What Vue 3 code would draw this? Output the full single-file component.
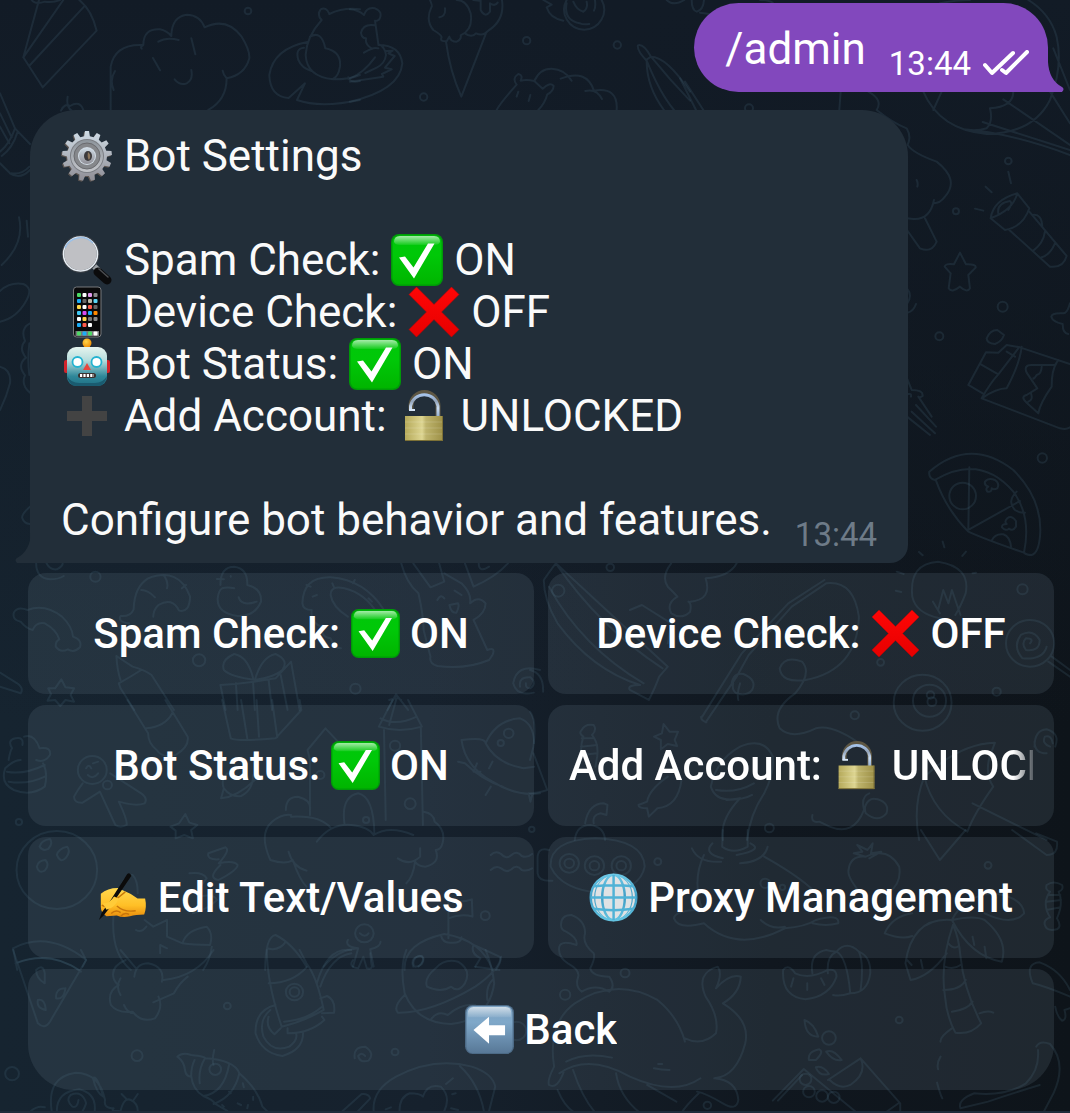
<script setup>
const statusLines = [
  { icon: 'lens', label: 'Spam Check:', mark: 'check', value: 'ON' },
  { icon: 'phone', label: 'Device Check:', mark: 'cross', value: 'OFF' },
  { icon: 'robot', label: 'Bot Status:', mark: 'check', value: 'ON' },
  { icon: 'plus', label: 'Add Account:', mark: 'lock', value: 'UNLOCKED' },
]

const keyboard = [
  { before: 'Spam Check:', icon: 'check', after: 'ON' },
  { before: 'Device Check:', icon: 'cross', after: 'OFF' },
  { before: 'Bot Status:', icon: 'check', after: 'ON' },
  { before: 'Add Account:', icon: 'lock', after: 'UNLOCKED', long: true },
  { before: '', icon: 'write', after: 'Edit Text/Values' },
  { before: '', icon: 'globe', after: 'Proxy Management' },
  { before: '', icon: 'back', after: 'Back', wide: true },
]

// Outline of a toothed wheel centred on (26, 26)
function gearPath(teeth, outer, inner) {
  const step = (Math.PI * 2) / teeth
  const pts = []
  for (let i = 0; i < teeth; i++) {
    const a = i * step - Math.PI / 2
    for (const [r, k] of [[inner, -0.3], [outer, -0.17], [outer, 0.17], [inner, 0.3]]) {
      pts.push(`${(26 + r * Math.cos(a + k * step)).toFixed(2)} ${(26 + r * Math.sin(a + k * step)).toFixed(2)}`)
    }
  }
  return `M${pts.join('L')}Z`
}
const gear = gearPath(13, 25, 20)

const appRows = [
  ['#4cd964', '#fff', '#e29cf0', '#8a8a8a'],
  ['#1badf8', '#666', '#bdb9a8', '#5bd6f5'],
  ['#ffd84a', '#fff', '#ff5a4a', '#666'],
  ['#3fc8f5', '#d84cf0', '#1badf8', '#ff8a00'],
  ['#fff', '#ffd84a', '#777', '#888'],
  ['#1badf8', '#ff5a4a', '#fff', '#0a0a0a'],
]
const dock = ['#4cd964', '#1badf8', '#4cd964', '#fff']

// Wallpaper doodles, grouped by tile: origin, scale, strokes and small rings
const tiles = [
  {
    at: 'translate(0 0) scale(.3333)',
    d: 'M117 0L70 172L128 262L290 92Q275 30 238 0M70 172L190 0M90 195L252 20M95 0Q105 15 135 5Q160 8 180 0M0 280L45 385L90 432M0 380L28 430M0 340L35 412M45 385Q30 430 0 455M53 395Q38 445 5 468M0 490L30 520Q60 540 90 510M35 520Q65 525 88 500M203 290Q198 320 215 332M183 332Q195 308 210 318Q240 300 250 330M332 330V200Q345 130 430 135Q420 140 425 146M430 135Q430 85 480 88Q500 92 514 108Q515 50 560 44Q600 45 614 82Q680 50 725 110Q750 150 748 175Q735 225 680 235Q670 225 668 212M680 235Q680 300 625 330M475 125Q500 110 536 120M574 115L586 163M459 174L480 211M524 238Q540 258 560 250Q580 240 574 210M345 213Q328 240 341 270M925 125Q820 145 808 225Q810 290 866 294L915 250L891 300Q960 325 1080 300M1080 28Q1030 22 988 42Q980 20 962 28Q950 45 965 60Q920 110 917 165Q920 230 1000 238Q1050 238 1080 225M930 110Q965 90 976 145Q1025 155 1020 200Q1015 230 1000 236M912 143Q885 145 895 180Q905 205 935 213M1045 232Q1050 250 1080 243',
    rings: [[744, 33, 10]],
  },
  {
    at: 'translate(350 0) scale(.3333)',
    d: 'M0 28Q25 30 42 45Q50 20 75 25Q100 35 88 58Q78 65 75 62L85 132Q105 140 108 165Q105 190 80 203L46 219M75 76Q40 70 33 98Q35 115 48 115Q45 135 65 145M42 158Q70 140 85 145M75 172Q40 220 0 235M0 245L100 230L96 222L125 208L105 203L134 168L115 160L128 152L108 153M85 135Q150 135 157 190Q150 270 0 305M240 0Q248 18 245 20Q225 60 250 90Q275 105 275 112Q268 125 290 124L298 110Q302 125 320 125Q335 118 332 106Q370 90 362 40Q350 0 320 0M285 25Q288 48 268 52M370 0L388 2M392 0V30Q405 55 420 35V10Q435 20 443 8M456 0Q465 60 415 92Q400 110 378 100Q365 115 345 100M288 125Q300 215 334 290L410 95M580 0L605 14L590 22Q600 55 640 62M650 0A60 60 0 1 0 755 0M650 10Q640 60 690 70Q700 75 718 72M670 5Q680 30 700 35Q715 25 710 5M735 0Q738 20 732 32M950 0Q970 20 1003 0M440 330Q450 310 500 254Q485 235 505 222Q520 225 512 242Q530 238 553 243Q570 205 605 206Q645 208 665 242M553 243L578 266Q600 245 611 258Q610 275 592 283Q585 310 565 330M632 236Q710 205 732 272Q805 260 800 330M706 273Q740 265 756 297M505 275L500 290M541 285L536 303M888 180Q860 150 864 136Q880 130 903 170ZM903 170Q950 170 1020 275M890 182Q890 260 942 330M890 182Q930 280 972 330M905 172Q960 240 1020 302',
    rings: [[221, 291, 11], [530, 122, 11], [802, 135, 11]],
  },
  {
    at: 'translate(680 0) scale(.3333)',
    d: 'M35 0Q35 30 50 35Q70 30 72 0M60 38L95 43M0 235L48 330M15 245L70 330M240 0Q270 0 280 10M780 10Q830 0 870 0M1045 0Q1110 40 1130 110Q1150 200 1110 300Q1060 400 920 402Q780 390 730 275M785 275L760 330M1000 275Q1000 320 930 325Q940 365 920 385Q890 395 850 388Q1000 400 1170 465M970 298L1170 435M908 366L1170 450M1120 145L1170 270M1110 275L1170 370M482 275L478 330M565 275Q610 300 590 330Q640 370 680 385Q695 410 683 435Q700 460 770 485Q840 540 795 590Q780 610 762 610M762 600Q750 660 700 657L681 655M681 690L720 745Q755 760 770 725L735 655M710 540Q715 550 712 560M985 515L993 550M917 560L935 577M885 626L910 632M932 655Q940 600 1012 580Q1000 630 932 655L975 690Q1030 680 1048 625L1012 580M955 640Q950 610 990 603Q1000 610 985 630M988 690L1110 800Q1150 805 1160 768L1048 635M1058 645Q1085 640 1087 680M1095 695Q1090 730 1060 752M1125 730Q1110 765 1085 772M840 758L858 793Q890 792 887 803L865 825L870 865Q862 880 840 860Q815 880 806 865L812 820L794 800Q795 790 822 793Z',
    rings: [[207, 325, 12], [985, 483, 10], [828, 634, 9]],
  },
  {
    at: 'translate(0 180) scale(.3333)',
    d: 'M57 112Q75 190 5 255M80 122L84 170M0 333Q30 305 70 312Q100 325 80 360Q50 415 0 425M90 430Q60 445 75 483Q55 505 78 533Q50 555 75 586Q62 615 90 638M88 490Q82 540 88 585M0 560Q35 570 30 610Q20 650 0 690',
    rings: [],
  },
  {
    at: 'translate(880 270) scale(.3333)',
    d: 'M81 55Q98 75 82 100M82 128Q100 125 108 102M570 100Q562 130 550 130Q515 128 514 140Q518 155 548 162Q548 190 565 192M320 205Q330 180 352 180L372 195Q365 215 345 222Q320 220 320 205M265 345L318 247L355 248L380 225L420 232L570 282M265 345L308 370M300 282L355 313L415 235M355 313Q330 340 305 385M380 245L405 260M425 230Q420 280 380 355Q350 355 305 385L540 475Q560 480 570 472M535 270L525 285H455Q430 285 440 308L472 355L440 375Q420 380 440 398L475 430Q480 400 515 350Q515 300 530 278M485 290Q485 310 470 315Q460 330 460 325M445 395Q460 390 453 370M81 325L95 360Q130 360 128 378Q118 385 115 380L155 440M108 405L168 470M95 425L165 490M81 440L150 495M85 372Q95 370 93 380M148 605Q270 500 400 600Q490 690 480 800Q475 850 455 855Q440 855 432 848Q455 740 400 665Q300 550 165 630Q145 625 148 605M168 632Q200 720 265 785Q320 810 432 848M268 592L265 780L420 693M410 665Q380 695 405 720Q420 730 435 728M335 812Q345 790 370 793Q390 800 393 830M315 635Q325 622 345 630Q360 640 352 655Q340 660 335 655Q335 668 322 665Q315 655 325 650Q312 645 315 635M408 753Q395 735 382 745Q372 755 380 762Q365 762 366 772Q378 785 387 776Q398 785 408 770ZM117 846L128 856M188 815L193 832M258 845L247 858',
    rings: [[368, 110, 15], [178, 199, 12], [487, 564, 14], [248, 678, 40]],
  },
  {
    at: 'translate(0 470) scale(.3444 .3333)',
    d: 'M87 110Q60 135 65 145Q70 160 87 162M105 280Q105 325 145 328Q170 328 185 318M135 280Q145 300 165 298Q182 290 182 280M95 480Q75 475 60 455Q35 450 40 428Q50 408 80 420Q130 400 180 440Q210 470 212 500Q240 510 232 532Q215 550 197 538Q175 550 162 530Q160 515 172 508Q165 480 130 460Q105 455 95 480M375 460Q340 455 350 438Q380 440 388 418Q390 350 430 325Q520 290 552 380Q550 430 520 422Q500 380 460 405Q445 420 445 440M410 360Q430 360 450 382M475 315Q490 335 485 355M540 345L528 355M640 345Q640 290 680 290Q720 295 718 345Q760 355 758 395Q740 440 690 438Q630 430 632 385Q635 360 645 355Q660 350 680 355M630 327L650 328M693 382Q700 410 745 395M670 318V320M878 400Q880 320 960 322Q1060 330 1115 420M960 375Q960 345 1000 355Q1060 370 1095 430M960 375Q965 410 1010 440M878 400Q880 420 905 420Q900 460 935 470Q930 500 960 505Q970 535 990 535M890 345L902 350M908 380L920 375M965 340L970 352M1030 330L1025 340M1070 385L1080 395M1165 280Q1180 340 1215 370Q1230 440 1230 480L1250 560Q1245 580 1270 588Q1350 600 1420 570M1200 280L1250 352L1290 335L1275 280M1290 310L1340 340Q1370 370 1365 400Q1390 375 1410 400Q1410 430 1375 450L1415 540Q1440 530 1430 555L1420 570M1350 280L1375 350Q1440 320 1475 280M1390 280Q1390 310 1420 290M1270 390Q1280 370 1290 385M1340 375L1320 362M1305 405Q1310 430 1325 428Q1335 410 1330 400ZM1568 600Q1500 580 1490 640Q1500 680 1550 668M1510 650Q1505 620 1540 622Q1560 640 1540 655Q1525 655 1527 640M640 645Q720 640 800 625L845 575L870 720M640 645L655 720M685 640L690 720M735 640L740 720M780 630L790 720M815 615L835 720M740 630Q760 560 800 552Q840 570 820 600Q800 620 740 630Q670 620 650 600Q640 570 680 552Q720 560 735 625M338 558L385 590Q420 600 440 615L505 720M338 558Q340 600 350 630M345 640Q380 620 410 600M345 640L350 655L390 720M178 628L190 652L215 655L205 675L215 695L190 690L175 708L160 690L138 692L148 672L140 655L160 655ZM0 608L50 640Q70 655 60 670L0 650M1125 720L1150 673L1185 720M1130 690Q1155 680 1165 690',
    rings: [[277, 320, 15], [578, 571, 18], [1032, 656, 15]],
  },
  {
    at: 'translate(530 560) scale(.3444 .3333)',
    d: 'M40 60Q60 30 75 10L400 320L375 350Q365 380 345 420L290 390Q280 375 320 375Q180 330 80 190Q40 120 40 60M75 10Q200 200 385 325M55 80Q150 260 330 370M290 150L325 135L410 190L400 250M410 10Q380 50 400 80Q420 100 428 110Q395 130 410 160Q440 180 465 155Q470 130 460 125M465 125Q530 120 510 55Q580 50 600 10M500 470L615 280L750 130L855 60M510 487L600 350L635 285L760 140L860 70Q940 60 955 170Q950 330 800 360Q730 370 725 325Q740 285 790 305Q820 340 770 400Q700 450 725 505Q760 540 830 505Q880 490 970 560M497 470Q495 480 512 487M585 375Q590 335 620 342Q660 360 645 390Q630 410 600 400Q585 390 590 370M610 370Q600 400 605 420M1110 110Q1100 10 1185 5Q1280 20 1265 100Q1250 140 1235 165M1110 110Q1120 160 1190 175M1170 125L1190 160M1185 150L1200 90L1215 130L1225 90L1250 165M1065 35L1085 42M1062 92L1078 96M1285 40L1295 38M1452 250Q1465 235 1440 235Q1425 250 1440 270Q1480 275 1480 240Q1460 205 1425 225Q1400 260 1430 295Q1490 300 1500 260M1515 290L1568 330M1505 305L1568 350M150 510Q160 490 185 495Q195 510 180 525Q200 550 195 590L190 620M150 510Q140 520 155 530Q145 560 150 590M150 535H185M148 560L195 555M150 585L195 580M388 492L405 515L430 515L420 540L427 558L400 552L380 568L380 540L360 530L383 520ZM440 660Q430 740 370 745L345 770L340 745Q315 745 315 735L340 725Q345 690 400 650M525 680Q540 600 610 560Q680 530 705 590Q710 640 680 700Q640 760 630 840M525 680Q540 730 610 715Q550 780 560 840M540 690Q600 700 650 670M570 720Q620 720 645 705M130 840Q135 795 175 795Q215 800 218 840M160 790Q170 730 215 730L225 735L222 765L205 760Q180 765 185 790M820 765Q815 790 840 785L870 800Q940 830 970 750Q960 710 985 700M975 735Q985 710 1010 718Q1045 730 1035 760Q1010 790 975 760Q970 745 975 735M1130 840Q1110 740 1145 650Q1250 550 1350 548L1335 590Q1320 640 1345 680Q1290 760 1270 815M1145 650Q1170 760 1270 815M1285 730L1500 840M1465 560Q1465 510 1500 508Q1540 520 1525 560M1500 580Q1465 580 1465 545M1510 560Q1485 550 1495 530Q1515 525 1518 550M0 455Q20 480 10 560L0 600M0 700Q20 700 50 690L10 580M0 330Q40 340 38 395',
    rings: [[82, 92, 18], [233, 22, 11], [1430, 88, 15], [1018, 307, 10], [1355, 395, 12], [943, 466, 12], [695, 804, 13], [1140, 428, 84], [1160, 422, 48], [1163, 405, 11], [1167, 425, 13], [1452, 250, 70]],
  },
  {
    at: 'translate(0 700) scale(.3444 .3333)',
    d: 'M370 0L430 100Q430 130 455 150Q470 175 510 165Q550 140 545 110L480 0M425 85Q480 80 500 40M645 0L670 115Q690 125 800 115L875 30L870 0M700 0L718 115M745 0L752 110M790 0L805 112M25 180Q30 150 35 145Q20 120 45 115Q70 110 65 135M70 110Q100 100 115 145Q150 140 145 165Q130 190 105 180M15 205Q40 180 60 180M15 205Q0 250 40 270Q90 290 130 260Q140 220 125 190M20 215Q70 225 130 195M25 245Q80 255 130 230M240 250Q225 270 215 290Q215 310 240 308L290 275L335 375Q350 385 368 375Q370 360 345 305Q395 320 420 310Q430 295 410 280L320 220M250 205Q258 190 265 205M270 190L285 185M255 225Q270 240 285 220M650 265Q640 240 660 220M735 225Q735 270 700 288Q670 292 650 265L642 295Q690 290 740 240M538 342L550 368L573 375L555 390L560 415L535 405L510 415L510 392L495 380L520 370ZM900 345V180L893 150L945 85L995 140M1140 0L1100 80Q1160 100 1225 80L1185 0M1115 90L1120 360M1222 85L1228 375M1000 370Q990 290 1040 280Q1085 290 1087 400M1105 55Q1150 80 1210 50M1130 75L1150 0M785 480Q750 400 790 365Q820 340 845 345M830 330Q830 290 865 290Q905 300 900 330M845 350Q930 345 962 385M920 425Q960 370 1020 375Q1070 380 1085 405Q1130 375 1200 405M1230 335Q1260 340 1262 365Q1295 390 1285 430Q1280 450 1265 450Q1280 490 1235 500Q1215 500 1205 485M785 480Q830 495 850 480Q870 540 890 560M838 455Q850 500 890 512M1155 475Q1190 500 1220 470V445M1205 485Q1200 530 1180 550M1340 120Q1410 110 1410 130Q1440 60 1510 55Q1550 70 1551 130M1340 120Q1350 200 1430 245Q1500 290 1568 280M1410 130Q1440 190 1520 205L1551 200M1420 205L1430 185M1385 190L1375 215L1395 215M1425 260L1410 285M1535 280L1540 305L1545 285M1330 185L1350 190Q1400 240 1460 260M115 440Q120 420 145 417Q155 430 140 447Q125 455 115 440M165 465Q170 445 195 440Q207 455 190 475Q175 490 165 465M107 500Q110 482 132 480Q145 495 130 512Q112 522 107 500M605 460L655 442Q670 450 635 490Q680 480 690 495Q690 510 635 540Q600 535 640 495M605 460Q600 480 635 478M550 520Q590 515 600 535Q570 570 580 590Q620 580 630 600Q600 630 560 640M1425 465Q1440 450 1455 462Q1470 480 1485 465Q1500 450 1515 468Q1530 475 1545 462M1425 510Q1440 495 1455 505Q1470 520 1485 508Q1500 492 1515 510Q1530 515 1545 505M330 640Q320 760 380 810M330 640Q350 520 385 525Q400 540 400 580M395 690Q410 700 425 680M420 660L445 680L485 660V710L530 730Q540 690 600 680Q620 700 610 735Q560 735 530 730M615 740Q610 780 590 810M465 760V735L485 745M770 810Q770 710 800 705Q850 730 890 800M775 745Q810 755 830 725M1010 720Q1000 740 1040 745L1025 800M1105 725Q1105 740 1075 748L1085 800M940 800Q980 750 1040 745M1045 700Q1060 715 1070 700M1175 810Q1170 730 1290 702Q1400 720 1430 810M1302 715V600Q1340 610 1370 598L1372 650Q1340 640 1302 655M1280 705Q1285 730 1310 728Q1340 730 1340 712M1200 800Q1190 770 1225 768Q1235 780 1215 800M1375 735Q1365 760 1395 775L1380 800M1375 735Q1410 750 1450 770Q1460 780 1440 810M38 745Q140 690 250 780L240 800M38 745L50 810M45 790Q140 750 230 810',
    rings: [[268, 210, 42], [312, 255, 13], [1147, 137, 15], [1191, 311, 16], [1063, 360, 9], [930, 225, 12], [1477, 100, 14], [1454, 129, 9], [1544, 388, 8], [55, 366, 9], [165, 510, 117], [1058, 700, 27], [1409, 647, 13]],
  },
  {
    at: 'translate(530 830) scale(.3444 .3333)',
    d: 'M60 110Q55 30 190 25Q330 30 333 110Q320 180 210 190Q90 180 60 110M55 60Q20 50 22 90V130Q25 155 65 152M90 285Q90 255 120 255Q160 270 160 310Q150 340 185 370Q190 385 175 415Q180 440 230 440Q250 470 230 485Q190 460 150 485Q130 470 140 440Q145 420 110 400Q80 380 85 350Q90 330 135 345Q140 325 105 305Q90 300 90 285M560 0L558 50Q590 75 632 50V0M470 55Q490 100 555 95M530 40Q500 70 560 85M640 40Q680 60 600 75M690 50Q680 95 610 100M505 75Q470 150 500 240Q420 240 418 265Q430 300 505 280Q600 370 740 295Q800 290 830 270Q900 250 895 280Q860 290 820 280M680 80Q800 150 840 200M670 270Q700 300 740 290M960 190Q920 140 925 120Q930 75 975 80Q1040 50 1072 110Q1080 160 1040 190M975 80L940 70L965 65L950 45L980 60L995 40L990 70L1020 65L985 85M1135 0L1190 90L1265 0M1400 0L1500 75Q1535 75 1530 35L1470 10M1225 270Q1260 200 1340 190Q1430 200 1435 250Q1400 290 1320 250M1110 250Q1050 260 1030 310Q1080 330 1110 318M1225 270Q1110 260 1090 400L1105 450Q1160 440 1210 370M1225 270Q1280 380 1370 395Q1390 330 1320 270Q1290 255 1225 270M1228 285Q1190 400 1205 500Q1210 560 1235 608Q1280 615 1310 580Q1260 480 1250 380Q1245 320 1228 285M1205 410Q1230 420 1250 405M1200 480Q1250 480 1265 450M1225 545Q1270 540 1285 515M1305 550Q1330 540 1345 548M1225 595Q1190 620 1192 635M1192 680Q1180 700 1185 718M1182 758Q1190 790 1197 805M1320 350L1325 385M1285 320L1290 345M1135 390L1140 415M1095 390L1108 405M1215 340Q1230 360 1245 348M1500 165Q1520 150 1545 165Q1550 180 1535 185Q1550 220 1530 265Q1545 290 1530 298Q1500 305 1495 285Q1490 270 1510 262Q1485 220 1510 185Q1495 180 1500 165M1505 195H1540M1500 215L1542 210M1500 240L1540 232M70 710Q50 580 130 520Q250 440 370 510Q430 560 450 635M450 625Q500 650 540 610Q550 560 510 500Q480 430 545 410Q560 430 540 475Q580 430 612 440Q610 490 560 520Q640 570 625 640Q600 740 535 745Q600 750 605 810Q600 845 560 820Q510 790 485 785M85 730Q170 670 290 740Q420 800 495 745M70 710Q50 750 55 765Q80 780 100 720M105 695Q160 665 238 683M125 720Q150 800 190 849M250 730Q260 800 320 849M340 765L425 815M490 790Q450 830 440 849M80 780Q100 830 130 849M360 715Q380 720 405 720M372 702H384M820 430Q810 370 860 360Q880 365 890 365Q920 330 955 365Q990 380 988 430Q980 490 930 490Q900 500 880 495M890 365Q920 380 930 490M890 365Q860 380 865 430M955 365Q970 400 960 480M735 420Q730 500 800 508Q870 500 890 440Q890 415 865 420Q810 450 770 430Q750 400 735 420M765 445L758 470M805 460V480M845 445L855 465M705 812L795 717L950 849M720 812L790 735M865 750L960 685L1075 820V849M960 685Q980 730 930 765Q900 780 870 750M1070 820L1030 849M797 570Q825 580 837 620Q800 620 797 570M810 690Q805 665 840 658Q855 665 830 690ZM860 665Q880 655 905 690Q880 695 860 665M830 712Q850 705 868 732Q840 740 830 712M1568 500Q1500 470 1460 460Q1435 400 1480 397Q1540 420 1568 480M1525 530Q1530 560 1545 572Q1560 570 1552 540L1568 535M1470 650Q1480 630 1510 642Q1560 700 1520 790L1490 849M1475 660Q1480 720 1440 760Q1380 800 1290 790Q1240 810 1250 835L1330 815Q1400 790 1480 765',
    rings: [[114, 100, 28], [114, 100, 14], [187, 107, 28], [187, 107, 14], [265, 107, 28], [265, 107, 14], [371, 95, 10], [1330, 106, 10], [276, 429, 13], [102, 494, 15], [1072, 570, 10], [515, 826, 11], [868, 624, 20], [683, 160, 14], [733, 172, 8], [800, 748, 17], [810, 785, 17], [848, 798, 17], [882, 802, 17]],
  },
  {
    at: 'translate(0 950) scale(.3444 .3333)',
    d: 'M38 0L110 220Q130 240 145 215L250 30L235 0M50 38Q150 0 235 65M105 60Q125 40 130 70V100Q105 85 105 60M190 115Q160 115 163 145Q185 150 190 115M110 150Q130 145 133 180Q105 175 110 150M350 0L395 55M365 30Q320 50 330 85Q335 100 345 105Q310 125 322 165Q340 190 385 185Q410 220 450 205Q475 170 460 140M390 80Q395 40 430 40Q480 50 470 95M360 165Q370 190 390 190M620 0Q570 80 475 90M545 80Q520 100 505 130L445 157M350 85Q335 110 350 135M775 0Q775 100 818 230Q880 215 940 180Q920 80 890 40L870 0M780 100Q850 100 892 50M825 215Q890 210 935 170M835 235V250Q900 250 942 210L935 200M920 100Q950 -10 1020 0M930 110Q960 20 1020 10M935 190L970 188Q975 150 950 138L930 145M800 165Q740 180 742 250Q760 310 820 318Q880 300 880 250M785 180Q750 210 765 260Q790 310 840 290Q865 270 860 252M780 200Q770 230 797 253L815 235M1025 30Q1010 50 1040 55L1055 20L1065 55Q1085 60 1078 40L1075 10M1180 0Q1160 50 1175 130Q1210 220 1310 222Q1420 210 1435 100Q1430 50 1410 0M1240 110Q1230 85 1265 55Q1290 25 1330 35Q1370 60 1350 100Q1330 130 1310 110Q1280 130 1240 110M1205 50Q1195 40 1205 25Q1220 10 1230 25Q1230 50 1205 50M1175 135Q1140 170 1155 188Q1250 190 1380 110Q1450 60 1455 20M1380 50L1450 60M1250 210Q1270 180 1300 195Q1340 160 1380 165M1415 150Q1410 110 1430 90M1030 325Q1025 290 1060 290Q1090 310 1070 332Q1045 340 1040 318Q1050 305 1060 318M150 483Q135 380 220 368Q290 370 305 450Q300 475 330 475Q320 485 345 483M270 385Q280 370 300 440Q280 430 270 385M275 483Q280 430 230 418Q165 425 165 483M228 450Q225 475 210 470Q190 450 205 435Q240 420 250 460Q245 475 240 483M350 483Q360 440 380 450Q400 460 400 483M353 432L368 448M400 432L388 450M90 483Q110 465 130 472M515 320Q530 305 555 315Q600 320 595 325Q680 330 695 370Q750 420 762 470L775 483M515 320Q535 335 537 360Q540 380 555 380Q555 350 565 330M555 378Q560 420 590 438Q620 450 625 462L660 483M590 438Q650 430 665 345M620 462Q680 440 695 370M580 400Q575 360 595 325M622 300Q615 330 620 345M665 425L670 430M705 400L708 412M735 440V450M690 460L700 465M645 465L650 470M720 465L718 475M1085 483Q1080 420 1150 380Q1260 320 1370 350Q1430 370 1438 410L1420 483M1335 348Q1390 400 1405 483M995 483L1050 432Q1070 430 1075 445L1040 483M1160 483Q1160 440 1190 430Q1220 430 1228 440Q1240 400 1280 410Q1310 440 1290 483M1295 402L1315 385M1313 433L1323 430M1120 478L1135 472M1310 475L1330 480',
    rings: [[855, 126, 25], [855, 126, 14], [660, 168, 10], [398, 317, 16], [1147, 306, 10], [35, 371, 20], [625, 358, 17], [1500, 243, 28]],
  },
]
</script>

<template>
  <div class="chat">
    <div class="wallpaper" aria-hidden="true">
      <svg class="doodles" width="1070" height="1113" viewBox="0 0 1070 1113">
        <g v-for="tile in tiles" :key="tile.at" :transform="tile.at">
          <path :d="tile.d" />
          <circle v-for="(ring, i) in tile.rings" :key="i" :cx="ring[0]" :cy="ring[1]" :r="ring[2]" />
        </g>
      </svg>
    </div>

    <svg class="sprite" aria-hidden="true">
      <defs>
        <linearGradient id="g-steel" x1="0" y1="0" x2="0" y2="1"><stop offset="0" stop-color="#cfdbe5" /><stop offset="1" stop-color="#8f8e96" /></linearGradient>
        <linearGradient id="g-dark" x1="0" y1="0" x2="0" y2="1"><stop offset="0" stop-color="#8d959c" /><stop offset="1" stop-color="#c3c5ca" /></linearGradient>
        <linearGradient id="g-green" x1="0" y1="0" x2="0" y2="1"><stop offset="0" stop-color="#00c70a" /><stop offset=".4" stop-color="#00c808" /><stop offset="1" stop-color="#00b500" /></linearGradient>
        <linearGradient id="g-shine" x1="0" y1="0" x2="0" y2="1"><stop offset="0" stop-color="#fff" stop-opacity=".65" /><stop offset="1" stop-color="#fff" stop-opacity=".08" /></linearGradient>
        <linearGradient id="g-red" x1="0" y1="0" x2="0" y2="1"><stop offset="0" stop-color="#ff0606" /><stop offset="1" stop-color="#e60000" /></linearGradient>
        <linearGradient id="g-robot" x1="0" y1="0" x2="0" y2="1"><stop offset="0" stop-color="#e6f4ee" /><stop offset=".35" stop-color="#b4dcdc" /><stop offset=".75" stop-color="#2f8799" /><stop offset="1" stop-color="#1f7085" /></linearGradient>
        <linearGradient id="g-brass" x1="0" y1="0" x2="1" y2="0"><stop offset="0" stop-color="#b5a95a" /><stop offset=".45" stop-color="#ddd591" /><stop offset=".55" stop-color="#beb46c" /><stop offset="1" stop-color="#9d9047" /></linearGradient>
        <linearGradient id="g-shackle" x1="0" y1="0" x2="0" y2="1"><stop offset="0" stop-color="#a5c3ea" /><stop offset=".3" stop-color="#93a4ba" /><stop offset=".6" stop-color="#c9dcf2" /><stop offset="1" stop-color="#8fadd0" /></linearGradient>
        <linearGradient id="g-hand" x1="0" y1="0" x2="0" y2="1"><stop offset="0" stop-color="#ffd84f" /><stop offset=".6" stop-color="#ffbf26" /><stop offset="1" stop-color="#e88c0c" /></linearGradient>
        <linearGradient id="g-blue" x1="0" y1="0" x2="0" y2="1"><stop offset="0" stop-color="#7da2c2" /><stop offset=".35" stop-color="#7fa8c9" /><stop offset="1" stop-color="#587897" /></linearGradient>
        <linearGradient id="g-globe" x1="0" y1="0" x2="0" y2="1"><stop offset="0" stop-color="#6bc8e6" /><stop offset=".5" stop-color="#3f9cc4" /><stop offset="1" stop-color="#63c4e2" /></linearGradient>
        <radialGradient id="g-knob" cx=".4" cy=".35" r=".7"><stop offset="0" stop-color="#ffd54a" /><stop offset="1" stop-color="#f08a00" /></radialGradient>
      </defs>

      <symbol id="e-gear" viewBox="0 0 52 52">
        <path :d="gear" fill="#5b5450" transform="translate(-1 1)" />
        <path :d="gear" fill="url(#g-steel)" />
        <circle cx="26" cy="26" r="17" fill="#7c7f85" />
        <circle cx="26" cy="26" r="16" fill="url(#g-dark)" />
        <circle cx="26" cy="26" r="13" fill="#85878b" stroke="#6a6b6f" />
        <circle cx="26" cy="26" r="9" fill="#d3dde6" />
        <circle cx="26" cy="26" r="8" fill="url(#g-steel)" />
        <ellipse cx="27" cy="26" rx="4" ry="5" fill="#3c3a3c" />
        <path d="M27 22Q31 25 28 30Q26 28 27 22Z" fill="#8d765c" />
      </symbol>

      <symbol id="e-lens" viewBox="0 0 52 52">
        <path d="M31 34L35 30L40 35L36 39Z" fill="#9aa0a5" />
        <path d="M37 38L46 46" stroke="#0b0b0c" stroke-width="9" stroke-linecap="round" />
        <path d="M38 35L47 43" stroke="#4b4d50" stroke-width="1.5" stroke-linecap="round" />
        <circle cx="19.500" cy="20" r="17.500" fill="#bfc0c4" stroke="#3d4248" stroke-width="2.500" />
        <circle cx="19.500" cy="20" r="17" fill="none" stroke="#e8eef4" stroke-width="1.500" />
        <path d="M4 14A17 17 0 0 1 32 9" fill="none" stroke="#9cc0e6" stroke-width="1.500" />
      </symbol>

      <symbol id="e-phone" viewBox="0 0 52 52">
        <rect x="12.500" y="1" width="27.500" height="50" rx="3" fill="#0a0a0b" stroke="#77797c" />
        <rect x="14.500" y="45" width="23.500" height="5" fill="#77797c" />
        <g v-for="(row, r) in appRows" :key="r">
          <rect v-for="(color, c) in row" :key="c" :x="16 + c * 5.5" :y="7 + r * 6" width="4" height="4" rx="1" :fill="color" />
        </g>
        <rect v-for="(color, c) in dock" :key="c" :x="16 + c * 5.5" y="45.500" width="4" height="4" rx="1" :fill="color" />
      </symbol>

      <symbol id="e-robot" viewBox="0 0 52 52">
        <path d="M20.500 11Q26 4 31.500 11Z" fill="#5b4a86" />
        <circle cx="26" cy="5" r="4.500" fill="url(#g-knob)" />
        <rect x="3" y="22" width="8" height="13" rx="2" fill="#d3232b" />
        <rect x="41" y="22" width="8" height="13" rx="2" fill="#d3232b" />
        <rect x="6" y="9" width="40" height="39" rx="9" fill="url(#g-robot)" />
        <path d="M6 38Q8 48 16 48H36Q44 48 46 38Q42 45 34 45H18Q10 45 6 38Z" fill="#1a5b70" />
        <circle cx="16.500" cy="24" r="5" fill="#fff" stroke="#24b3d0" stroke-width="1.800" />
        <circle cx="35.500" cy="24" r="5" fill="#fff" stroke="#24b3d0" stroke-width="1.800" />
        <path d="M26 25L30 32H22Z" fill="#e8463f" />
        <rect x="17" y="35" width="18" height="5" rx="2.500" fill="#3b3230" />
        <path d="M19 37.500H33" stroke="#fff" stroke-width="3" stroke-dasharray="2.200 1.200" />
      </symbol>

      <symbol id="e-plus" viewBox="0 0 52 52">
        <path d="M21 6H31V21H46V31H31V46H21V31H6V21H21Z" fill="#434343" />
      </symbol>

      <symbol id="e-check" viewBox="0 0 52 52">
        <rect width="52" height="52" rx="8" fill="#009a08" />
        <rect x="1.500" y="1.500" width="49" height="49" rx="7" fill="url(#g-green)" />
        <path d="M9 2H43Q49 2 49 8Q48 11 43 11H9Q4 11 3 8Q3 2 9 2Z" fill="url(#g-shine)" />
        <path d="M8 23.500L14 22.500L22.500 33.500L37 9.500H43.500L23 44.500Z" fill="#fff" />
      </symbol>

      <symbol id="e-cross" viewBox="0 0 52 52">
        <path d="M8.500 1L26 18.500L43.500 1L51 8.500L33.500 26L51 43.500L43.500 51L26 33.500L8.500 51L1 43.500L18.500 26L1 8.500Z" fill="url(#g-red)" stroke="#c40000" stroke-width=".5" />
      </symbol>

      <symbol id="e-lock" viewBox="0 0 52 52">
        <path d="M13 20V16A13.500 13.500 0 0 1 40 16V27" fill="none" stroke="#5e5744" stroke-width="5" />
        <path d="M12.500 20V16A14 14 0 0 1 40 16V27" fill="none" stroke="url(#g-shackle)" stroke-width="3" />
        <path d="M11 20H17" stroke="#d7e6f7" stroke-width="2" />
        <rect x="7" y="26" width="38" height="25" fill="url(#g-brass)" />
        <path d="M7 32H45M7 38H45M7 44H45" stroke="#fff" stroke-opacity=".15" />
        <path d="M7 50.500H45M44.500 26V51" stroke="#7d7136" />
      </symbol>

      <symbol id="e-write" viewBox="0 0 52 52">
        <path d="M3 22Q10 16 21 16L28 19Q36 22 42 27L50 27Q52 36 49 44Q40 44 34 46Q26 48 20 45L9 46Q3 42 3 36Z" fill="url(#g-hand)" />
        <path d="M4 34Q10 38 14 32L29 20" fill="none" stroke="#c77808" stroke-width="1.500" />
        <path d="M14 43Q19 38 24 42M24 46Q28 41 33 44M20 35Q28 42 40 40" fill="none" stroke="#c8750b" stroke-width="1.500" />
        <path d="M31 1Q34 -1 35.500 3L13 36L6 45L1 50L4 42L12 31Z" fill="#0b0b0b" />
        <path d="M5 32Q12 33 17 25L22 27Q18 37 9 39Z" fill="#ffcb38" />
      </symbol>

      <symbol id="e-globe" viewBox="0 0 52 52">
        <circle cx="26" cy="26" r="24" fill="#dfe2e4" />
        <g fill="none" stroke="url(#g-globe)" stroke-width="2.600">
          <circle cx="26" cy="26" r="24.200" />
          <ellipse cx="26" cy="26" rx="12" ry="24" />
          <ellipse cx="26" cy="26" rx="20" ry="24" stroke-width="1.200" />
          <path d="M26.100 2V50M2 26L50 26.100M5 14Q26 12 47 14M5 38Q26 41 47 38" stroke="#4fb2d6" />
        </g>
      </symbol>

      <symbol id="e-back" viewBox="0 0 52 52">
        <rect width="52" height="52" rx="8" fill="#4c6a86" />
        <rect x="1.500" y="1" width="49" height="50" rx="7" fill="url(#g-blue)" />
        <path d="M9 2H43Q49 2 49 9V13H3V9Q3 2 9 2Z" fill="url(#g-shine)" />
        <path d="M9 26.500L25.500 12.500V21.500H42.500V32H25.500V41Z" fill="#fff" />
      </symbol>
    </svg>

    <main class="thread">
      <article class="bubble outgoing">
        <p class="line">/admin</p>
        <footer class="meta">
          <time>13:44</time>
          <svg class="ticks" viewBox="0 0 46 26" role="img" aria-label="Read">
            <path d="M2 15L9 23L30 3M19 20L23 23L44 2" />
          </svg>
        </footer>
        <svg class="tail" viewBox="0 0 16 30" aria-hidden="true"><path d="M0 0Q1 18 14 25Q17 27 14 30H0Z" /></svg>
      </article>

      <article class="bubble incoming">
        <h1 class="line"><svg class="emoji"><use href="#e-gear" /></svg> Bot Settings</h1>
        <ul class="status">
          <li v-for="item in statusLines" :key="item.label" class="line">
            <svg class="emoji"><use :href="`#e-${item.icon}`" /></svg> {{ item.label }} <svg class="emoji"><use :href="`#e-${item.mark}`" /></svg> {{ item.value }}
          </li>
        </ul>
        <div class="closing">
          <p class="line">Configure bot behavior and features.</p>
          <footer class="meta"><time>13:44</time></footer>
        </div>
        <svg class="tail" viewBox="0 0 16 30" aria-hidden="true"><path d="M16 0Q15 18 2 25Q-1 27 2 30H16Z" /></svg>
      </article>

      <nav class="keyboard">
        <button v-for="key in keyboard" :key="key.before + key.after" type="button" class="key" :class="{ wide: key.wide }">
          <span class="caption" :class="{ faded: key.long }">{{ key.before }} <svg class="emoji"><use :href="`#e-${key.icon}`" /></svg> {{ key.after }}</span>
        </button>
      </nav>
    </main>
    <div class="edge"></div>
  </div>
</template>

<style>
body {
  margin: 0;
  background: #121a26;
}
</style>

<style scoped>
.chat {
  position: relative;
  display: flex;
  flex-direction: column;
  min-height: 100vh;
  font-family: Roboto, "Liberation Sans", sans-serif;
  color: #fff;
  background:
    linear-gradient(180deg, #121b26 0%, rgba(18, 27, 38, 0) 65%),
    linear-gradient(90deg, #162430 0%, #16212d 40%, #10171f 72%, #0e141a 100%);
}

.wallpaper {
  position: absolute;
  inset: 0;
  overflow: hidden;
}

.doodles {
  display: block;
  fill: none;
  stroke: rgba(74, 110, 130, 0.2);
  stroke-width: 2px;
  stroke-linecap: round;
  stroke-linejoin: round;
}

.doodles path,
.doodles circle {
  vector-effect: non-scaling-stroke;
}

.sprite {
  position: absolute;
  width: 0;
  height: 0;
}

.thread {
  position: relative;
  display: flex;
  flex: 1;
  flex-direction: column;
  padding: 3px 16px 21px 28px;
}

.bubble {
  position: relative;
  box-sizing: border-box;
  padding: 20px 31px 17px;
}

.outgoing {
  display: flex;
  align-self: flex-end;
  margin-right: 6px;
  padding-right: 19px;
  border-radius: 45px 45px 0 45px;
  background: #8248bd;
}

.incoming {
  align-self: flex-start;
  margin: 18px 0 10px 2px;
  border-radius: 46px 46px 18px 0;
  background: #222e39;
  color: #fafafa;
}

.tail {
  position: absolute;
  bottom: 0;
  width: 16px;
  height: 30px;
}

.outgoing .tail {
  right: -16px;
  fill: #8248bd;
}

.incoming .tail {
  left: -15px;
  fill: #222e39;
}

.line {
  margin: 0;
  font-size: 44px;
  font-weight: 400;
  line-height: 52px;
  white-space: nowrap;
}

.emoji {
  display: inline-block;
  width: 52px;
  height: 52px;
  vertical-align: -11px;
}

.status {
  margin: 52px 0;
  padding: 0;
  list-style: none;
}

.closing {
  display: flex;
}

.meta {
  display: flex;
  gap: 12px;
  align-items: flex-start;
  margin-left: 23px;
  padding-top: 20px;
  height: 32px;
  font-size: 33px;
  line-height: 42px;
}

.incoming .meta {
  color: #6e7b88;
}

.ticks {
  width: 46px;
  height: 26px;
  margin-top: 7px;
  fill: none;
  stroke: #fff;
  stroke-width: 4px;
  stroke-linecap: round;
  stroke-linejoin: round;
}

.keyboard {
  display: grid;
  grid-template-columns: 1fr 1fr;
  gap: 11px 14px;
}

.key {
  display: flex;
  align-items: center;
  justify-content: center;
  min-width: 0;
  height: 121px;
  padding: 0 21px;
  border: 0;
  border-radius: 18px;
  background: rgba(102, 122, 134, 0.2);
  color: #fff;
  font-family: inherit;
  font-size: 42px;
  font-weight: 500;
  line-height: 49px;
  cursor: pointer;
}

.key .emoji {
  width: 49px;
  height: 49px;
  vertical-align: -10px;
}

.key.wide {
  grid-column: 1 / -1;
  border-radius: 18px 18px 46px 46px;
}

.caption {
  min-width: 0;
  overflow: hidden;
  white-space: nowrap;
}

.faded {
  -webkit-mask-image: linear-gradient(90deg, #000 calc(100% - 20px), rgba(0, 0, 0, 0.25));
  mask-image: linear-gradient(90deg, #000 calc(100% - 20px), rgba(0, 0, 0, 0.25));
}

.edge {
  position: relative;
  height: 2px;
  background: #1f2c3b;
}
</style>
